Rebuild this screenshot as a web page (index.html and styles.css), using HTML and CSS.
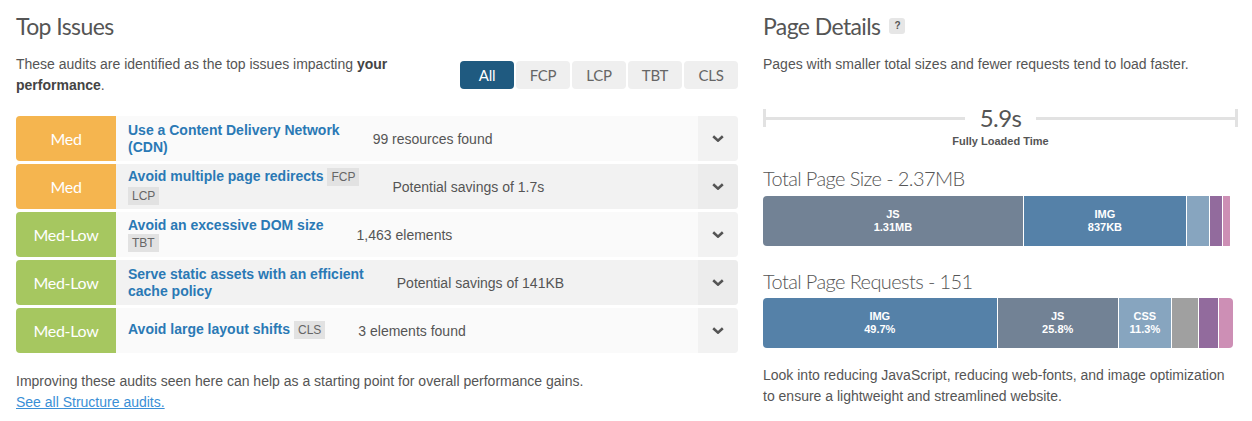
FILE: index.html
```html
<!DOCTYPE html>
<html lang="en">
<head>
    <meta charset="UTF-8">
    <meta name="viewport" content="width=device-width, initial-scale=1.0">
    <title>Performance Report</title>
    <link rel="stylesheet" href="styles.css">
</head>
<body>
    <div class="page">
        <section class="issues">
            <h2 class="heading">Top Issues</h2>
            <div class="intro">
                <p class="intro-text">These audits are identified as the top issues impacting <b>your</b> <b>performance</b>.</p>
                <div class="filters">
                    <button class="filter active">All</button>
                    <button class="filter">FCP</button>
                    <button class="filter">LCP</button>
                    <button class="filter">TBT</button>
                    <button class="filter">CLS</button>
                </div>
            </div>
            <div class="audits">
                <div class="audit">
                    <div class="impact med">Med</div>
                    <div class="audit-body">
                        <div class="audit-title"><a href="#">Use a Content Delivery Network<br>(CDN)</a></div>
                        <div class="audit-desc">99 resources found</div>
                    </div>
                    <div class="toggle"><svg width="12" height="7" viewBox="0 0 12 7"><polyline points="1.2,1.2 6,5.6 10.8,1.2" /></svg></div>
                </div>
                <div class="audit alt">
                    <div class="impact med">Med</div>
                    <div class="audit-body">
                        <div class="audit-title"><a href="#">Avoid multiple page redirects</a> <span class="tag">FCP</span><br><span class="tag">LCP</span></div>
                        <div class="audit-desc">Potential savings of 1.7s</div>
                    </div>
                    <div class="toggle"><svg width="12" height="7" viewBox="0 0 12 7"><polyline points="1.2,1.2 6,5.6 10.8,1.2" /></svg></div>
                </div>
                <div class="audit">
                    <div class="impact low">Med-Low</div>
                    <div class="audit-body">
                        <div class="audit-title"><a href="#">Avoid an excessive DOM size</a><br><span class="tag">TBT</span></div>
                        <div class="audit-desc">1,463 elements</div>
                    </div>
                    <div class="toggle"><svg width="12" height="7" viewBox="0 0 12 7"><polyline points="1.2,1.2 6,5.6 10.8,1.2" /></svg></div>
                </div>
                <div class="audit alt">
                    <div class="impact low">Med-Low</div>
                    <div class="audit-body">
                        <div class="audit-title"><a href="#">Serve static assets with an efficient<br>cache policy</a></div>
                        <div class="audit-desc">Potential savings of 141KB</div>
                    </div>
                    <div class="toggle"><svg width="12" height="7" viewBox="0 0 12 7"><polyline points="1.2,1.2 6,5.6 10.8,1.2" /></svg></div>
                </div>
                <div class="audit">
                    <div class="impact low">Med-Low</div>
                    <div class="audit-body">
                        <div class="audit-title"><a href="#">Avoid large layout shifts</a> <span class="tag">CLS</span></div>
                        <div class="audit-desc">3 elements found</div>
                    </div>
                    <div class="toggle"><svg width="12" height="7" viewBox="0 0 12 7"><polyline points="1.2,1.2 6,5.6 10.8,1.2" /></svg></div>
                </div>
            </div>
            <p class="note">Improving these audits seen here can help as a starting point for overall performance gains.<br>
                <a href="#">See all Structure audits.</a></p>
        </section>

        <section class="details">
            <h2 class="heading">Page Details <span class="help">?</span></h2>
            <p class="intro-line">Pages with smaller total sizes and fewer requests tend to load faster.</p>
            <div class="timeline">
                <span class="cap"></span>
                <span class="rule"></span>
                <span class="time">5.9s</span>
                <span class="rule"></span>
                <span class="cap"></span>
            </div>
            <div class="time-label">Fully Loaded Time</div>

            <h3 class="bar-title size-title">Total Page Size - 2.37MB</h3>
            <div class="bar">
                <div class="seg js" style="width: 55.3%">JS<br>1.31MB</div>
                <div class="seg img" style="width: 34.7%">IMG<br>837KB</div>
                <div class="seg css" style="width: 4.9%"></div>
                <div class="seg font" style="width: 2.8%"></div>
                <div class="seg other" style="width: 1.7%"></div>
            </div>

            <h3 class="bar-title">Total Page Requests - 151</h3>
            <div class="bar">
                <div class="seg img" style="width: 49.7%">IMG<br>49.7%</div>
                <div class="seg js" style="width: 25.8%">JS<br>25.8%</div>
                <div class="seg css" style="width: 11.3%">CSS<br>11.3%</div>
                <div class="seg html" style="width: 5.8%"></div>
                <div class="seg font" style="width: 4.3%"></div>
                <div class="seg other" style="width: 3.1%"></div>
            </div>

            <p class="outro">Look into reducing JavaScript, reducing web-fonts, and image optimization to ensure a lightweight and streamlined website.</p>
        </section>
    </div>
</body>
</html>
```

FILE: styles.css
```css
body {
    margin: 0;
    padding: 0;
    font-family: "Liberation Sans", Arial, sans-serif;
    font-size: 14px;
    color: #555;
    background: #fff;
}
.page {
    display: grid;
    grid-template-columns: 722px 475px;
    column-gap: 25px;
    padding: 12px 14px 0 16px;
}
p {
    margin: 0;
    line-height: 21px;
}
.heading {
    margin: 0;
    font-family: Lato, "Open Sans", sans-serif;
    font-weight: 400;
    font-size: 23px;
    line-height: 28px;
    letter-spacing: -0.6px;
    color: #555;
    display: flex;
    align-items: center;
}

/* top issues */
.intro {
    display: flex;
    justify-content: space-between;
    align-items: center;
    margin-top: 14px;
}
.intro-text {
    width: 400px;
}
.intro-text b {
    color: #444;
}
.filters {
    display: flex;
    gap: 2px;
}
.filter {
    width: 54px;
    height: 28px;
    border: 0;
    border-radius: 4px;
    background: #efefef;
    color: #666;
    font-family: Lato, "Open Sans", sans-serif;
    font-weight: 400;
    font-size: 15px;
    letter-spacing: -0.3px;
    padding: 0;
}
.filter.active {
    background: #1f5a80;
    color: #fff;
}
.audits {
    display: flex;
    flex-direction: column;
    gap: 3px;
    margin-top: 20px;
}
.audit {
    display: flex;
    height: 45px;
    border-radius: 4px;
    background: #fafafa;
    overflow: hidden;
}
.audit.alt {
    background: #f2f2f2;
}
.impact {
    width: 100px;
    flex-shrink: 0;
    display: flex;
    align-items: center;
    justify-content: center;
    color: #fff;
    font-family: Lato, "Open Sans", sans-serif;
    font-size: 16px;
    letter-spacing: -0.3px;
}
.impact.med {
    background: #f5b54f;
}
.impact.low {
    background: #a6c760;
}
.audit-body {
    flex: 1;
    display: flex;
    align-items: center;
    padding-left: 12px;
}
.audit-title {
    line-height: 17px;
    font-weight: bold;
}
.audit-title a {
    color: #2a79b5;
    text-decoration: none;
}
.tag {
    display: inline-block;
    vertical-align: middle;
    background: #e2e2e2;
    color: #666;
    font-weight: normal;
    font-size: 12px;
    line-height: 16px;
    padding: 1px 4px;
    margin: 0 0 1px 0;
}
.audit-desc {
    margin-left: 33px;
}
.toggle {
    width: 40px;
    flex-shrink: 0;
    display: flex;
    align-items: center;
    justify-content: center;
    background: #f2f2f2;
}
.audit.alt .toggle {
    background: #ececec;
}
.toggle svg polyline {
    fill: none;
    stroke: #555;
    stroke-width: 2.6;
}
.note {
    margin-top: 18px;
}
.note a {
    color: #3a8fd6;
}

/* page details */
.help {
    display: inline-flex;
    align-items: center;
    justify-content: center;
    width: 16px;
    height: 16px;
    margin-left: 9px;
    border-radius: 3px;
    background: #e6e6e6;
    color: #555;
    font-family: "Liberation Sans", Arial, sans-serif;
    font-weight: bold;
    font-size: 10px;
    letter-spacing: 0;
}
.intro-line {
    margin-top: 14px;
}
.timeline {
    display: flex;
    align-items: center;
    height: 18px;
    margin-top: 34px;
}
.cap {
    width: 3px;
    height: 18px;
    background: #e2e2e2;
}
.rule {
    flex: 1;
    height: 3px;
    background: #e2e2e2;
}
.time {
    padding: 0 15px;
    font-family: Lato, "Open Sans", sans-serif;
    font-size: 24px;
    line-height: 18px;
    letter-spacing: -0.6px;
    color: #555;
}
.time-label {
    margin-top: 7px;
    text-align: center;
    font-weight: bold;
    font-size: 11px;
    line-height: 14px;
    color: #555;
}
.bar-title {
    margin: 23px 0 5px;
    font-family: Lato, "Open Sans", sans-serif;
    font-weight: 300;
    font-size: 20px;
    line-height: 24px;
    letter-spacing: -0.6px;
    color: #555;
}
.size-title {
    margin-top: 18px;
    margin-bottom: 6px;
}
.bar {
    display: flex;
    width: 470px;
    height: 50px;
    border-radius: 4px;
    overflow: hidden;
}
.seg {
    display: flex;
    align-items: center;
    justify-content: center;
    text-align: center;
    box-sizing: border-box;
    border-left: 1px solid #fff;
    color: #fff;
    font-weight: bold;
    font-size: 11px;
    line-height: 13px;
}
.seg:first-child {
    border-left: 0;
}
.seg.js {
    background: #728295;
}
.seg.img {
    background: #5581a8;
}
.seg.css {
    background: #87a5bf;
}
.seg.html {
    background: #a0a0a0;
}
.seg.font {
    background: #926b9d;
}
.seg.other {
    background: #cd8fb5;
}
.outro {
    margin-top: 17px;
}
```
